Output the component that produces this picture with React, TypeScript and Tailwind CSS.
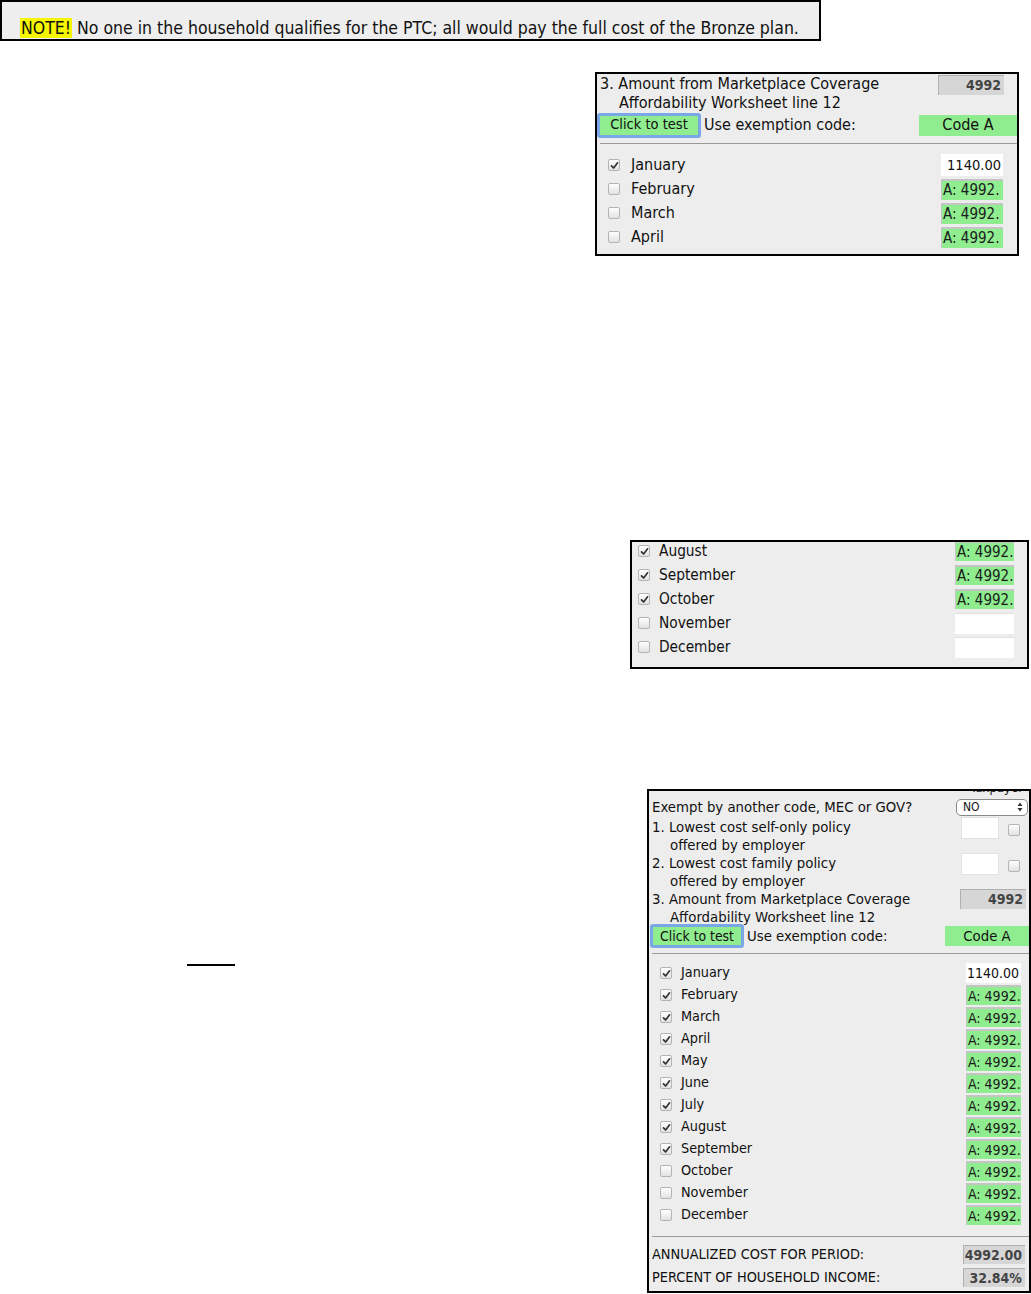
import React from "react";

function Check({ on }: { on: boolean }) {
  return (
    <span className="inline-flex items-center justify-center w-[12px] h-[12px] rounded-[2px] border border-[#b4b4b4] bg-gradient-to-b from-white to-[#e2e2e2] shrink-0">
      {on ? (
        <svg width="9" height="9" viewBox="0 0 9 9">
          <path d="M1.5 4.8 L3.6 7 L7.6 1.8" fill="none" stroke="#333" strokeWidth="1.7" strokeLinecap="round" strokeLinejoin="round" />
        </svg>
      ) : null}
    </span>
  );
}

function GreenVal({ w, h }: { w: string; h: string }) {
  return (
    <div className={`${w} ${h} overflow-hidden whitespace-nowrap bg-[#8fec8f] border-t-2 border-l border-[#c4c4c4] text-[15px] leading-[18px] pl-[1px] text-[#1a1a1a]`}>
      A: 4992.
    </div>
  );
}

const font = "font-['DejaVu_Sans_Condensed','DejaVu_Sans',sans-serif]";

export default function App() {
  const box2 = [
    ["January", true, "white"],
    ["February", false, "green"],
    ["March", false, "green"],
    ["April", false, "green"],
  ] as const;
  const box3 = [
    ["August", true, "green"],
    ["September", true, "green"],
    ["October", true, "green"],
    ["November", false, "white"],
    ["December", false, "white"],
  ] as const;
  const months = [
    "January", "February", "March", "April", "May", "June", "July", "August", "September", "October", "November", "December",
  ];
  return (
    <div className={`${font} bg-white w-[1031px] h-[1294px] overflow-hidden text-[#111]`}>
      {/* NOTE box */}
      <div className="w-[821px] h-[41px] border-2 border-black bg-[#eeeeee] flex items-end pb-[1px] pl-[18px] text-[17.5px]">
        <span className="bg-[#f6f600] px-[1px] leading-[20px]">NOTE!</span>
        <span className="ml-[5px] leading-[20px]">No one in the household qualifies for the PTC; all would pay the full cost of the Bronze plan.</span>
      </div>

      {/* Box 2 */}
      <div className="ml-[595px] mt-[31px] w-[424px] h-[184px] border-2 border-black bg-[#ededed] overflow-hidden text-[16px]">
        <div className="flex justify-between h-[38px]">
          <div className="pl-[3px] leading-[19px]">
            <div>3. Amount from Marketplace Coverage</div>
            <div className="pl-[19px]">Affordability Worksheet line 12</div>
          </div>
          <div className="mt-[1px] mr-[13px] w-[66px] h-[20px] bg-[#d6d6d6] border-t border-l border-[#b0b0b0] text-right pr-[3px] text-[14px] leading-[19px] font-bold text-[#444]">4992</div>
        </div>
        <div className="flex items-center h-[26px]">
          <div className="w-[104px] h-[25px] rounded-[3px] border-[3px] border-[#7aa7e6] bg-[#8fec8f] flex items-center justify-center text-[14.5px]">Click to test</div>
          <span className="ml-[3px]">Use exemption code:</span>
          <div className="ml-auto w-[98px] h-[21px] bg-[#8fec8f] flex items-center justify-center">Code A</div>
        </div>
        <div className="mt-[5px] ml-[3px] h-px bg-[#9a9a9a]" />
        <div className="pt-[9px]">
          {box2.map(([m, on, kind]) => (
            <div key={m} className="flex items-center h-[24px] pl-[11px] pr-[14px]">
              <Check on={on} />
              <span className="ml-[11px]">{m}</span>
              <div className="ml-auto">
                {kind === "white" ? (
                  <div className="w-[62px] h-[22px] bg-white text-right pr-[2px] text-[14.5px] leading-[22px]">1140.00</div>
                ) : (
                  <GreenVal w="w-[62px]" h="h-[21px]" />
                )}
              </div>
            </div>
          ))}
        </div>
      </div>

      {/* Box 3 */}
      <div className="ml-[630px] mt-[284px] w-[399px] h-[129px] border-2 border-black bg-[#ededed] overflow-hidden text-[15.3px]">
        <div className="-mt-[3px]">
          {box3.map(([m, on, kind]) => (
            <div key={m} className="flex items-center h-[24px] pl-[6px] pr-[13px]">
              <Check on={on} />
              <span className="ml-[9px]">{m}</span>
              <div className="ml-auto">
                {kind === "white" ? (
                  <div className="w-[59px] h-[21px] bg-white border-t border-[#e0e0e0]" />
                ) : (
                  <GreenVal w="w-[59px]" h="h-[20px]" />
                )}
              </div>
            </div>
          ))}
        </div>
      </div>

      {/* Box 4 row */}
      <div className="flex mt-[120px]">
        <div className="w-[647px] shrink-0">
          <div className="ml-[187px] mt-[175px] w-[48px] h-[2px] bg-black" />
        </div>
        <div className="w-[384px] h-[504px] border-2 border-black bg-[#ededed] overflow-hidden text-[14.8px]">
          <div className="h-[6px] relative overflow-hidden">
            <div className="absolute right-[6px] -top-[10px] text-[13px] leading-[14px]">Taxpayer</div>
          </div>
          <div className="flex items-center justify-between h-[20px] pl-[3px] pr-[1px]">
            <span>Exempt by another code, MEC or GOV?</span>
            <div className="w-[72px] h-[17px] rounded-[5px] border border-[#8a8a8a] bg-white flex items-center justify-between pl-[6px] pr-[4px] text-[12px] leading-none">
              <span>NO</span>
              <svg width="6" height="10" viewBox="0 0 6 10">
                <path d="M3 0.5 L5.5 4 L0.5 4 Z M3 9.5 L5.5 6 L0.5 6 Z" fill="#333" />
              </svg>
            </div>
          </div>
          {[
            ["1. Lowest cost self-only policy", "offered by employer"],
            ["2. Lowest cost family policy", "offered by employer"],
          ].map(([a, b]) => (
            <div key={a} className="flex justify-between h-[36px] pl-[3px] pr-[9px] leading-[18px]">
              <div className="pt-[1px]">
                <div>{a}</div>
                <div className="pl-[18px]">{b}</div>
              </div>
              <div className="flex items-start">
                <div className="w-[38px] h-[22px] bg-white border border-[#e2e2e2]" />
                <div className="ml-[9px] mt-[5px]"><Check on={false} /></div>
              </div>
            </div>
          ))}
          <div className="flex justify-between h-[36px] pl-[3px] pr-[3px] leading-[18px]">
            <div className="pt-[1px]">
              <div>3. Amount from Marketplace Coverage</div>
              <div className="pl-[18px]">Affordability Worksheet line 12</div>
            </div>
            <div className="w-[66px] h-[20px] bg-[#d6d6d6] border-t border-l border-[#b0b0b0] text-right pr-[3px] text-[14px] leading-[19px] font-bold text-[#444]">4992</div>
          </div>
          <div className="flex items-center h-[22px]">
            <div className="ml-[1px] w-[94px] h-[24px] rounded-[3px] border-[3px] border-[#7aa7e6] bg-[#8fec8f] flex items-center justify-center text-[13.8px]">Click to test</div>
            <span className="ml-[3px]">Use exemption code:</span>
            <div className="ml-auto w-[84px] h-[20px] bg-[#8fec8f] flex items-center justify-center">Code A</div>
          </div>
          <div className="mt-[6px] ml-[3px] h-px bg-[#9a9a9a]" />
          <div className="pt-[8px] text-[14px]">
            {months.map((m, i) => (
              <div key={m} className="flex items-center h-[22px] pl-[11px] pr-[8px]">
                <Check on={i < 9} />
                <span className="ml-[9px] text-[14.3px]">{m}</span>
                <div className="ml-auto">
                  {i === 0 ? (
                    <div className="w-[55px] h-[20px] bg-white text-right pr-[2px] text-[14px] leading-[20px]">1140.00</div>
                  ) : (
                    <div className="w-[55px] h-[20px] overflow-hidden whitespace-nowrap bg-[#8fec8f] border-t-2 border-l border-[#c4c4c4] text-[14px] leading-[18px] pl-[1px] text-[#1a1a1a]">A: 4992.</div>
                  )}
                </div>
              </div>
            ))}
          </div>
          <div className="mt-[10px] ml-[3px] h-px bg-[#9a9a9a]" />
          <div className="pt-[6px] pl-[3px] pr-[4px] text-[14.4px]">
            {[
              ["ANNUALIZED COST FOR PERIOD:", "4992.00"],
              ["PERCENT OF HOUSEHOLD INCOME:", "32.84%"],
            ].map(([a, b]) => (
              <div key={a} className="flex items-center justify-between h-[23px]">
                <span>{a}</span>
                <div className="w-[62px] h-[19px] bg-[#d6d6d6] border-t border-l border-[#b0b0b0] text-right pr-[3px] text-[14px] leading-[18px] font-bold text-[#444]">{b}</div>
              </div>
            ))}
          </div>
        </div>
      </div>
    </div>
  );
}
